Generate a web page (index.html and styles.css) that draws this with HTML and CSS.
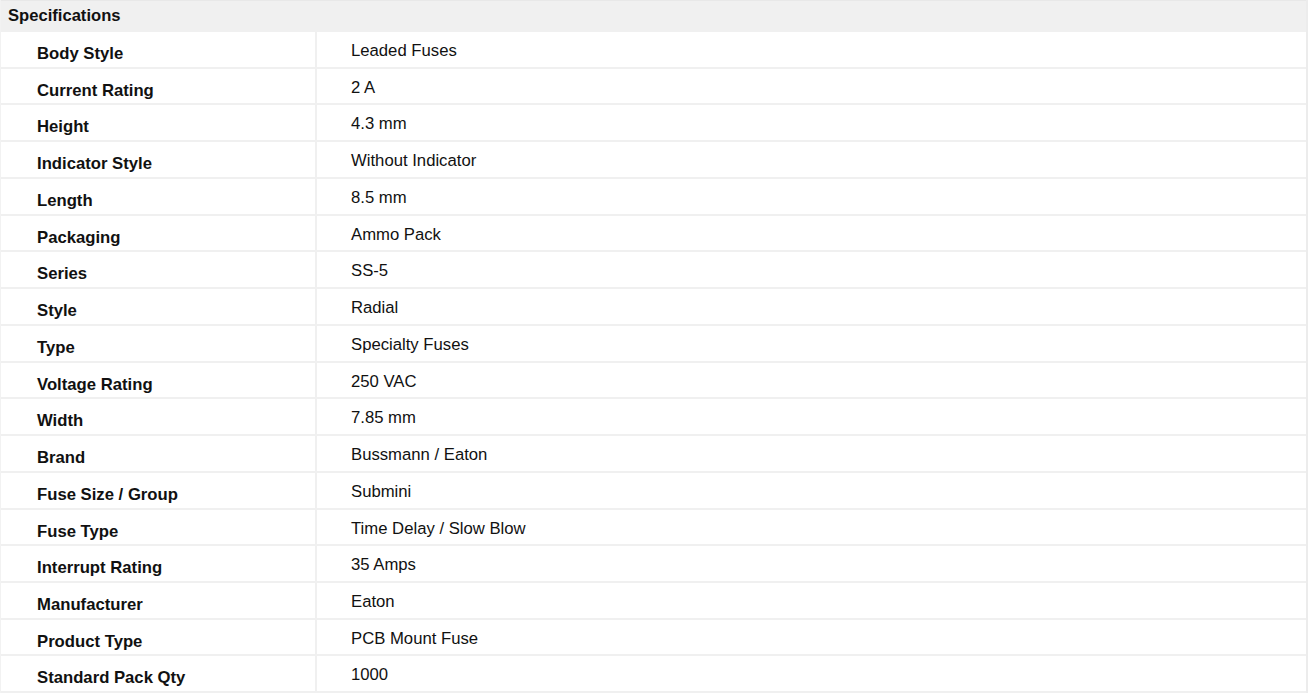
FILE: index.html
```html
<!DOCTYPE html>
<html>
<head>
<meta charset="utf-8">
<link rel="stylesheet" href="styles.css">
</head>
<body>
<div class="specs">
  <div class="specs-head">Specifications</div>
  <div class="specs-table">
    <div class="row"><div class="label">Body Style</div><div class="value">Leaded Fuses</div></div>
    <div class="row"><div class="label">Current Rating</div><div class="value">2 A</div></div>
    <div class="row"><div class="label">Height</div><div class="value">4.3 mm</div></div>
    <div class="row"><div class="label">Indicator Style</div><div class="value">Without Indicator</div></div>
    <div class="row"><div class="label">Length</div><div class="value">8.5 mm</div></div>
    <div class="row"><div class="label">Packaging</div><div class="value">Ammo Pack</div></div>
    <div class="row"><div class="label">Series</div><div class="value">SS-5</div></div>
    <div class="row"><div class="label">Style</div><div class="value">Radial</div></div>
    <div class="row"><div class="label">Type</div><div class="value">Specialty Fuses</div></div>
    <div class="row"><div class="label">Voltage Rating</div><div class="value">250 VAC</div></div>
    <div class="row"><div class="label">Width</div><div class="value">7.85 mm</div></div>
    <div class="row"><div class="label">Brand</div><div class="value">Bussmann / Eaton</div></div>
    <div class="row"><div class="label">Fuse Size / Group</div><div class="value">Submini</div></div>
    <div class="row"><div class="label">Fuse Type</div><div class="value">Time Delay / Slow Blow</div></div>
    <div class="row"><div class="label">Interrupt Rating</div><div class="value">35 Amps</div></div>
    <div class="row"><div class="label">Manufacturer</div><div class="value">Eaton</div></div>
    <div class="row"><div class="label">Product Type</div><div class="value">PCB Mount Fuse</div></div>
    <div class="row"><div class="label">Standard Pack Qty</div><div class="value">1000</div></div>
  </div>
</div>
</body>
</html>
```

FILE: styles.css
```css
html, body {
  margin: 0;
  padding: 0;
  background: #ffffff;
}

body {
  font-family: "Liberation Sans", Arial, sans-serif;
  color: #111111;
}

.specs {
  width: 1305px;
  border-left: 1px solid #f2f2f2;
  border-right: 2px solid #ececec;
}

.specs-head {
  height: 32px;
  box-sizing: border-box;
  background: #f0f0f0;
  border-top: 1px solid #e8e8e8;
  padding: 6px 0 0 7px;
  font-weight: bold;
  font-size: 16.6px;
  line-height: 18px;
}

.specs-table {
  display: grid;
  grid-auto-rows: 36.74px;
}

.row {
  display: grid;
  grid-template-columns: 316px 1fr;
  border-bottom: 2px solid #f0f0f0;
  box-sizing: border-box;
}

.label {
  border-right: 2px solid #f0f0f0;
  padding: 13px 0 0 36px;
  font-weight: bold;
  font-size: 16.7px;
  line-height: 18px;
}

.value {
  padding: 10px 0 0 34px;
  font-size: 16.7px;
  line-height: 18px;
}
```
